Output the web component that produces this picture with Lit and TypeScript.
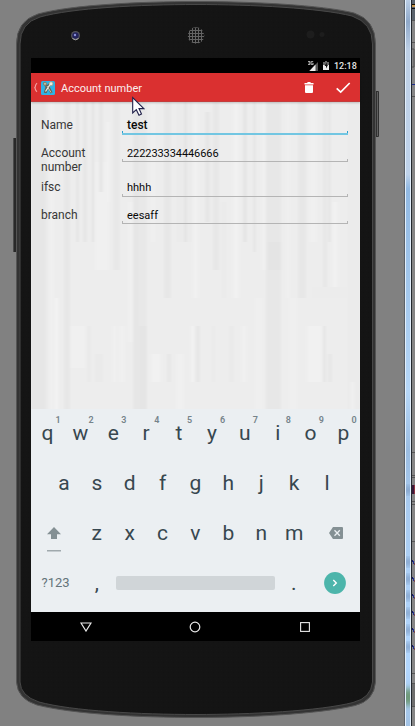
import { LitElement, html, css, svg } from "lit";
import { customElement } from "lit/decorators.js";

// Soft vertical grain of the form background: [x, y, width, height, grey level]
const GRAIN: number[][] = [
  [0, 0, 15, 307, 230], [15, 0, 3, 307, 235], [18, 0, 5, 307, 240], [33, 0, 6, 307, 231],
  [45, 0, 3, 140, 229], [52, 0, 4, 140, 230], [61, 0, 2, 140, 226], [64, 60, 14, 108, 240],
  [82, 0, 7, 168, 232], [97, 100, 6, 140, 240], [102, 0, 6, 307, 230], [108, 0, 8, 307, 232],
  [133, 0, 7, 196, 231], [145, 0, 16, 140, 235], [153, 0, 3, 140, 228], [162, 0, 5, 196, 241],
  [182, 0, 6, 168, 231], [190, 100, 6, 96, 235], [202, 0, 6, 196, 241], [212, 0, 4, 140, 229],
  [222, 0, 3, 150, 230], [231, 0, 3, 168, 241], [235, 0, 15, 307, 231], [255, 0, 4, 196, 239],
  [267, 0, 8, 196, 231], [278, 0, 8, 140, 240], [292, 0, 4, 196, 231], [297, 0, 3, 140, 230],
  [301, 100, 6, 96, 241], [316, 0, 13, 307, 235],
  [24, 196, 3, 111, 243], [39, 224, 16, 42, 240], [56, 224, 4, 56, 233], [64, 252, 8, 28, 234],
  [82, 224, 3, 56, 241], [88, 224, 6, 56, 240], [108, 224, 8, 83, 229], [120, 252, 10, 28, 241],
  [136, 252, 4, 28, 231], [145, 252, 8, 55, 240], [160, 224, 3, 56, 242], [165, 224, 4, 56, 230],
  [181, 224, 3, 56, 234], [198, 224, 5, 56, 234], [211, 224, 4, 56, 241], [224, 196, 8, 111, 239],
  [258, 196, 8, 111, 239], [276, 224, 15, 56, 241], [292, 224, 3, 56, 230], [297, 252, 4, 28, 231],
  [280, 185, 36, 11, 236], [320, 280, 3, 27, 240], [237, 140, 13, 28, 228],
  [75, 20, 4, 80, 241], [68, 0, 4, 90, 230], [174, 10, 5, 110, 230], [120, 0, 4, 140, 240],
];

const NUMBERED: [string, string][] = [
  ["q", "1"], ["w", "2"], ["e", "3"], ["r", "4"], ["t", "5"],
  ["y", "6"], ["u", "7"], ["i", "8"], ["o", "9"], ["p", "0"],
];

@customElement("device-frame")
class DeviceFrame extends LitElement {
  static styles = css`
    :host { display: block; width: 415px; height: 726px; }
    svg { display: block; }
  `;
  render() {
    const body =
      "M16.5 44 Q16.5 21 38 14 C70 5 140 1.500 196 1.500 C252 1.500 322 5 354 13 Q375.500 20 375.500 44 V682 Q374 701 355 705.500 C320 714 250 717.500 196 717.500 C140 717.500 72 714 37 705 Q17.500 699 16.500 682 Z";
    const inner =
      "M20 44 Q20 23 40 17 C72 8 140 4.500 196 4.500 C252 4.500 320 8 352 16 Q372.500 23 372.500 44 V682 Q371 698 353 702.500 C320 711 250 714.500 196 714.500 C140 714.500 72 711 39 702 Q20.500 696 20 682 Z";
    const marks = [490, 562, 579, 596, 613, 630, 647];
    return html`<svg width="415" height="726" viewBox="0 0 415 726">
      <defs>
        <pattern id="mesh" width="3" height="3" patternUnits="userSpaceOnUse">
          <rect width="3" height="3" fill="#171717" />
          <path d="M.5 0V3M0 .5H3" stroke="#636363" stroke-width="1" />
        </pattern>
        <pattern id="grit" width="5" height="5" patternUnits="userSpaceOnUse">
          <rect width="5" height="5" fill="#141414" />
          <rect x="1" width="1" height="1" fill="#161616" /><rect x="3" y="2" width="1" height="1" fill="#121212" />
          <rect y="3" width="1" height="1" fill="#151515" />
        </pattern>
        <linearGradient id="strip" x1="0" y1="0" x2="0" y2="1">
          <stop offset="0" stop-color="#bacde4" /><stop offset=".03" stop-color="#8fa9ca" />
          <stop offset=".07" stop-color="#bed0e6" /><stop offset=".24" stop-color="#bfd3eb" />
          <stop offset=".26" stop-color="#91b9e3" /><stop offset=".54" stop-color="#b6d7f8" />
          <stop offset=".62" stop-color="#9bbde2" /><stop offset=".7" stop-color="#a9cbf0" />
          <stop offset=".92" stop-color="#b2d7ff" /><stop offset="1" stop-color="#a2c2e4" />
        </linearGradient>
        <filter id="soft" x="-50%" y="-50%" width="200%" height="200%"><feGaussianBlur stdDeviation="0.300 3" /></filter>
      </defs>
      <rect width="415" height="726" fill="#818181" />
      <rect x="13" y="138" width="4" height="114" rx="1" fill="#292929" />
      <rect x="13" y="138" width="1" height="114" fill="#4a4a4a" />
      <rect x="375" y="91" width="4" height="46" rx="1" fill="#303030" />
      <rect x="377" y="92" width="1" height="44" fill="#606060" />
      <path d=${body} fill="#333" stroke="#555" stroke-width="1" />
      <path d=${inner} fill="url(#grit)" stroke="#484848" stroke-width="1" />
      <circle cx="75.500" cy="35.500" r="4.500" fill="#55555a" />
      <circle cx="75.500" cy="35.500" r="3.200" fill="#23235c" />
      <circle cx="75" cy="35" r="1.200" fill="#8a90d8" />
      <path d="M72.500 38.500 a4.500 4.500 0 0 0 6 0" fill="none" stroke="#aaa" stroke-width="1" />
      <circle cx="196" cy="35.500" r="8.300" fill="url(#mesh)" />
      <circle cx="310.500" cy="34.500" r="4" fill="#1d1d1d" /><circle cx="322" cy="34.500" r="2.500" fill="#1d1d1d" />
      <rect x="404" width="1" height="726" fill="#5d6268" />
      <rect x="405" width="6" height="726" fill="#e3effb" />
      <rect x="406" width="4" height="726" fill="url(#strip)" />
      ${marks.map((y) => svg`<rect x="406" y=${y - 3} width="4" height="6" fill="#7f9dc5" filter="url(#soft)" />`)}
      <rect x="406" y="689" width="4" height="16" fill="#6f9a7c" filter="url(#soft)" />
      <rect x="411" width="1" height="726" fill="#24292f" />
      <rect x="412" width="3" height="726" fill="#858585" />
      <rect x="412" width="3" height="20" fill="#59636d" />
      <rect x="412" y="4" width="3" height="1" fill="#1a1000" /><rect x="412" y="5" width="3" height="2" fill="#c99a50" />
      <rect x="412" y="8" width="3" height="1" fill="#111" />
      <path d="M412 49 h2 V67 h-2" fill="none" stroke="#555" />
      <rect x="412" y="84" width="3" height="1" fill="#1c2d90" />
      ${[20, 42, 96, 452, 475, 477, 501, 504, 541, 673, 683, 706].map((y) => svg`<rect x="412" y=${y} width="3" height="1" fill="#565656" />`)}
      <rect x="412" y="485" width="2" height="9" fill="#3a1838" /><rect x="414" y="485" width="1" height="9" fill="#8c3340" />
      <rect x="412" y="684" width="3" height="22" fill="#6d6d6d" />
      ${[560, 577, 594, 611, 628, 645].map(
        (y) => svg`<rect x="412" y=${y} width="1" height="2" fill="#161b66" /><rect x="413" y=${y + 1} width="1" height="3" fill="#23328f" /><rect x="414" y=${y + 3} width="1" height="2" fill="#7a4a50" />`
      )}
    </svg>`;
  }
}

@customElement("account-screen")
class AccountScreen extends LitElement {
  static styles = css`
    :host { display: flex; flex-direction: column; width: 329px; height: 583px; background: #000; font-family: Roboto, sans-serif; }
    svg { display: block; flex: none; }
    .status { height: 15px; display: flex; align-items: center; justify-content: flex-end; padding-right: 5px; color: #e4e4e4; font-size: 9px; font-weight: 500; line-height: 15px; }
    .battery { margin-left: 4px; }
    .clock { width: 21px; margin-left: 5px; padding-top: 1px; white-space: nowrap; }
    .bar { height: 29px; box-sizing: border-box; background: #da3030; border-bottom: 1px solid #c43c3c; display: flex; align-items: center; color: #fff; box-shadow: 0 1px 2px #0003; z-index: 1; }
    .title { flex: 1; padding: 3px 0 0 5px; font-size: 11px; line-height: 28px; color: #fbeeee; }
    .form { position: relative; height: 307px; background: #ededed; overflow: hidden; }
    .grain { position: absolute; inset: 0; }
    .fields { position: relative; padding: 16px 12px 0 10px; }
    .row { display: grid; grid-template-columns: 81px 226px; color: #373737; font-size: 12px; line-height: 14px; }
    .value { box-sizing: border-box; padding-left: 5px; color: #080808; font-size: 11px; line-height: 16px; border-bottom: 1px solid #b4b4b4; align-self: start; position: relative; }
    .value::before, .value::after { content: ""; position: absolute; bottom: 0; width: 1px; height: 2px; background: #b4b4b4; }
    .value::before { left: 0; }
    .value::after { right: 0; }
    .name { height: 28px; line-height: 15px; }
    .name .value { font-size: 12px; font-weight: 500; height: 17px; line-height: 15px; border-bottom: 2px solid #72c6e2; }
    .name .value::before, .name .value::after { background: #2a9fd0; }
    .number { height: 34px; }
    .number .value { height: 16px; letter-spacing: -0.08px; }
    .ifsc { height: 28px; line-height: 15px; }
    .ifsc .value { height: 17px; }
    .branch .value { height: 16px; }
    .keys { height: 203px; background: #ebeff2; color: #37474f; font-size: 21px; }
    .line { height: 50px; display: flex; line-height: 50px; }
    .line.first { height: 49px; line-height: 48px; }
    .key { width: 32.9px; flex: none; text-align: center; position: relative; }
    .mid { padding-left: 16.5px; }
    .hint { position: absolute; left: 24.500px; top: 5px; font-size: 9px; line-height: 12px; font-weight: 600; color: #75838a; }
    .line.third { align-items: center; }
    .side { width: 49.300px; box-sizing: border-box; padding-right: 3.300px; display: flex; justify-content: center; flex: none; }
    .shift { margin-top: 13px; }
    .side.erase { width: 55px; }
    .sym { width: 49.300px; text-align: center; font-size: 13px; color: #65747a; flex: none; }
    .line.last { align-items: center; }
    .space { width: 159px; height: 14px; margin-left: 3px; background: #d0d5d8; border-radius: 2px; flex: none; }
    .dot { width: 37px; text-align: center; flex: none; }
    .go { margin-left: 12px; }
    .nav { height: 29px; display: grid; grid-template-columns: 1fr 1fr 1fr; place-items: center; }
  `;
  field(kind: string, label: string, value: string) {
    return html`<div class="row ${kind}"><div>${label}</div><div class="value">${value}</div></div>`;
  }
  key(k: string, hint = "") {
    return html`<div class="key">${k}${hint ? html`<span class="hint">${hint}</span>` : ""}</div>`;
  }
  render() {
    return html`
      <div class="status">
        <svg width="11" height="10" viewBox="0 0 11 10">
          <path d="M10 1V10H1Z" fill="#555" /><path d="M7.500 3.500V10H1.500Z" fill="#eee" />
          <path d="M0 .5h2v3h-2M.5 2h1.500M5.200 .5h-2v3h2V2.200h-1" fill="none" stroke="#ccc" stroke-width=".8" />
        </svg>
        <svg class="battery" width="6" height="9" viewBox="0 0 6 9">
          <path d="M2 0H4V1H6V9H0V1H2Z" fill="#686868" /><path d="M0 4H6V9H0Z" fill="#eee" />
          <path d="M3.800 1.500 L1.500 5H3V7.500L5 4H3.800Z" fill="#111" />
        </svg>
        <span class="clock">12:18</span>
      </div>
      <div class="bar">
        <svg width="25" height="28" viewBox="0 0 25 28">
          <path d="M6 10.200 Q4.300 12 4.300 13.500 T3.300 14.500 Q4.300 14.800 4.300 16 T6 18.700" fill="none" stroke="#f3a0a0" stroke-width="1.200" />
          <rect x="10" y="8" width="14" height="14" rx="1.500" fill="#2fb3e5" />
          <path d="M13 9.500L15.500 14L14 20" fill="none" stroke="#6d6f63" stroke-width="2.400" />
          <path d="M21 9.500L17 13L14.500 19.500" fill="none" stroke="#57605c" stroke-width="2.600" />
          <path d="M17 13L20.500 20" stroke="#67604e" stroke-width="2.400" />
          <circle cx="14" cy="10.800" r="1.600" fill="#c4bd9c" stroke="#7d7a65" stroke-width=".8" />
          <circle cx="20" cy="10.800" r="2" fill="#eceade" stroke="#a39c80" stroke-width=".8" />
          <path d="M19 11.500L14.500 18.500" stroke="#eeede2" stroke-width="1.300" />
          <path d="M16 13L20 19.500" stroke="#cfcab3" stroke-width="1" />
        </svg>
        <span class="title">Account number</span>
        <svg width="59" height="28" viewBox="0 0 59 28">
          <path d="M3.500 10H6L6.800 9H9.200L10 10H12.500V11.500H3.500ZM4 12.200H12V19Q12 20 11 20H5Q4 20 4 19Z" fill="#fff" />
          <path d="M35.700 15.300 L39.700 19 L48.700 10" fill="none" stroke="#fff" stroke-width="1.700" />
        </svg>
      </div>
      <div class="form">
        <svg class="grain" width="329" height="307" viewBox="0 0 329 307">
          <defs><filter id="b" x="0" y="0" width="329" height="307" filterUnits="userSpaceOnUse"><feGaussianBlur stdDeviation="1.300 0.500" /></filter></defs>
          <g filter="url(#b)">
            <rect width="329" height="307" fill="#ededed" />
            ${GRAIN.map(([x, y, w, h, g]) => svg`<rect x=${x} y=${y} width=${w} height=${h} fill="rgb(${g},${g},${g})" />`)}
          </g>
        </svg>
        <div class="fields">
          ${this.field("name", "Name", "test")}
          ${this.field("number", "Account number", "222233334446666")}
          ${this.field("ifsc", "ifsc", "hhhh")}
          ${this.field("branch", "branch", "eesaff")}
        </div>
      </div>
      <div class="keys">
        <div class="line first">${NUMBERED.map(([k, n]) => this.key(k, n))}</div>
        <div class="line mid">${[..."asdfghjkl"].map((k) => this.key(k))}</div>
        <div class="line third">
          <div class="side">
            <svg class="shift" width="14" height="25" viewBox="0 0 14 25">
              <path d="M7 0L14 7.200H10V12H4V7.200H0Z" fill="#849094" /><rect y="23" width="14" height="1.500" fill="#a0a9ad" />
            </svg>
          </div>
          ${[..."zxcvbnm"].map((k) => this.key(k))}
          <div class="side erase">
            <svg width="14" height="12" viewBox="0 0 14 12">
              <path d="M4 0H13Q14 0 14 1V11Q14 12 13 12H4L0 6Z" fill="#849094" />
              <path d="M5.500 3.200L10.800 8.700M10.800 3.200L5.500 8.700" stroke="#ebeff2" stroke-width="1.300" />
            </svg>
          </div>
        </div>
        <div class="line last">
          <div class="sym">?123</div>
          ${this.key(",")}
          <div class="space"></div>
          <div class="dot">.</div>
          <svg class="go" width="22" height="22" viewBox="0 0 22 22">
            <circle cx="11" cy="11" r="10.900" fill="#4cb5ab" />
            <path d="M9.300 8L12.300 11L9.300 14" fill="none" stroke="#fff" stroke-width="1.400" />
          </svg>
        </div>
      </div>
      <div class="nav">
        <svg width="12" height="10" viewBox="0 0 12 10"><path d="M1 1H11L6 9Z" fill="none" stroke="#e8e8e8" stroke-width="1.200" /></svg>
        <svg width="12" height="12" viewBox="0 0 12 12"><circle cx="6" cy="6" r="4.800" fill="none" stroke="#e8e8e8" stroke-width="1.200" /></svg>
        <svg width="10" height="10" viewBox="0 0 10 10"><rect x=".6" y=".6" width="8.800" height="8.800" fill="none" stroke="#e8e8e8" stroke-width="1.100" /></svg>
      </div>`;
  }
}

@customElement("app-root")
class AppRoot extends LitElement {
  static styles = css`
    :host { display: grid; width: 415px; height: 726px; overflow: hidden; }
    device-frame, account-screen { grid-area: 1 / 1; }
    account-screen { margin: 58px 0 0 31px; }
    .pointer { position: absolute; z-index: 2; left: 132px; top: 96px; }
  `;
  render() {
    return html`<device-frame></device-frame><account-screen></account-screen>
      <svg class="pointer" width="13" height="21" viewBox="0 0 13 21">
        <path d="M.7 1.500V17L4.300 13.700L7 19.300L9.500 18L7 12.600H11.800Z" fill="#fff" stroke="#20204a" stroke-width="1.100" />
      </svg>`;
  }
}
